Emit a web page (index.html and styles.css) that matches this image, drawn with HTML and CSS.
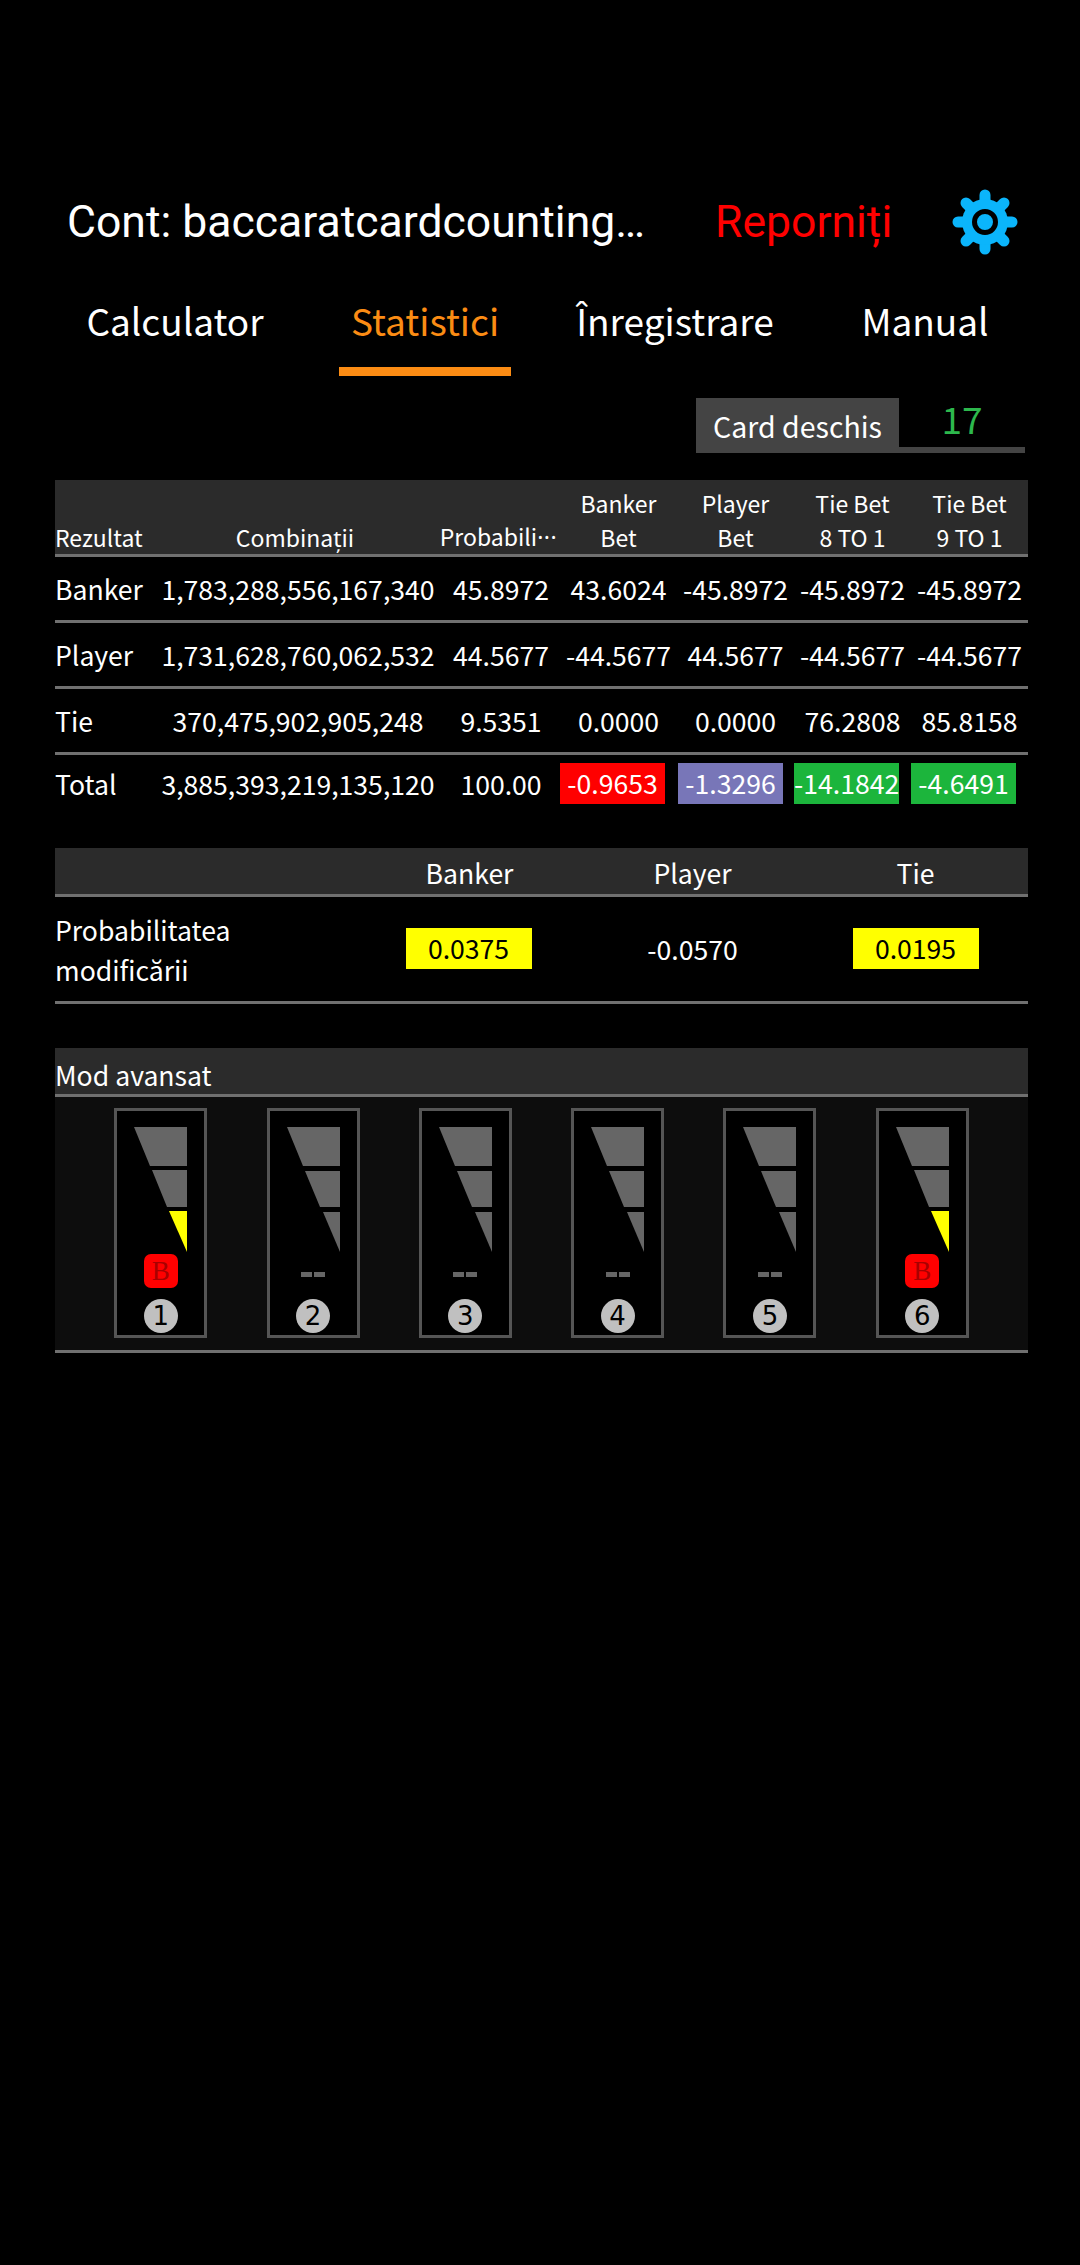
FILE: index.html
```html
<!DOCTYPE html>
<html lang="ro">
<head>
<meta charset="utf-8">
<title>Statistici</title>
<link rel="stylesheet" href="styles.css">
</head>
<body>
<svg class="defs" width="0" height="0" aria-hidden="true">
  <defs>
    <symbol id="wedge-g" viewBox="0 0 93 230">
      <polygon class="g" points="20,19 73,19 73,58 36,58"/>
      <polygon class="g" points="38,63 73,63 73,99 53,99"/>
      <polygon class="g" points="56,104 73,104 73,144"/>
    </symbol>
    <symbol id="wedge-y" viewBox="0 0 93 230">
      <polygon class="g" points="20,19 73,19 73,58 36,58"/>
      <polygon class="g" points="38,62 73,62 73,99 53,99"/>
      <polygon class="y" points="55,103 73,103 73,144"/>
    </symbol>
  </defs>
</svg>
<main class="page">
  <header class="top">
    <div class="account">Cont: baccaratcardcounting…</div>
    <div class="restart">Reporniți</div>
    <svg class="gear" viewBox="-35 -35 70 70" aria-label="Setări">
      <g class="teeth">
        <line x1="0" y1="0" x2="0" y2="-27"/>
        <line x1="0" y1="0" x2="19" y2="-19"/>
        <line x1="0" y1="0" x2="27" y2="0"/>
        <line x1="0" y1="0" x2="19" y2="19"/>
        <line x1="0" y1="0" x2="0" y2="27"/>
        <line x1="0" y1="0" x2="-19" y2="19"/>
        <line x1="0" y1="0" x2="-27" y2="0"/>
        <line x1="0" y1="0" x2="-19" y2="-19"/>
      </g>
      <circle class="gear-body" r="23"/>
      <circle class="gear-ring" r="10.5"/>
    </svg>
  </header>

  <nav class="tabs">
    <div class="tab"><span class="tab-label">Calculator</span></div>
    <div class="tab active"><span class="tab-label">Statistici</span></div>
    <div class="tab"><span class="tab-label">Înregistrare</span></div>
    <div class="tab"><span class="tab-label">Manual</span></div>
  </nav>

  <div class="open-card">
    <div class="open-label">Card deschis</div>
    <div class="open-value">17</div>
  </div>

  <section class="stats">
    <div class="row head">
      <div class="left">Rezultat</div>
      <div class="off">Combinații</div>
      <div class="prob">Probabili<span class="dots">···</span></div>
      <div>Banker<br>Bet</div>
      <div>Player<br>Bet</div>
      <div>Tie Bet<br>8 TO 1</div>
      <div>Tie Bet<br>9 TO 1</div>
    </div>
    <div class="row body">
      <div class="left">Banker</div><div>1,783,288,556,167,340</div><div class="pct">45.8972</div><div>43.6024</div><div>-45.8972</div><div>-45.8972</div><div>-45.8972</div>
    </div>
    <div class="row body">
      <div class="left">Player</div><div>1,731,628,760,062,532</div><div class="pct">44.5677</div><div>-44.5677</div><div>44.5677</div><div>-44.5677</div><div>-44.5677</div>
    </div>
    <div class="row body">
      <div class="left">Tie</div><div>370,475,902,905,248</div><div class="pct">9.5351</div><div>0.0000</div><div>0.0000</div><div>76.2808</div><div>85.8158</div>
    </div>
    <div class="row total">
      <div class="left">Total</div><div>3,885,393,219,135,120</div><div class="pct">100.00</div>
      <div class="chip red">-0.9653</div><div class="chip purple">-1.3296</div><div class="chip green">-14.1842</div><div class="chip green">-4.6491</div>
    </div>
  </section>

  <section class="change">
    <div class="crow chead">
      <div></div><div>Banker</div><div>Player</div><div>Tie</div>
    </div>
    <div class="crow cbody">
      <div class="left label">Probabilitatea<br>modificării</div>
      <div class="cell first"><span class="chip yellow">0.0375</span></div>
      <div class="cell">-0.0570</div>
      <div class="cell"><span class="chip yellow">0.0195</span></div>
    </div>
  </section>

  <section class="advanced">
    <div class="adv-head">Mod avansat</div>
    <div class="adv-body">
      <div class="slot"><svg class="wedge"><use href="#wedge-y"/></svg><div class="badge">B</div><div class="num">1</div></div>
      <div class="slot"><svg class="wedge"><use href="#wedge-g"/></svg><div class="dashes"><i></i><i></i></div><div class="num">2</div></div>
      <div class="slot"><svg class="wedge"><use href="#wedge-g"/></svg><div class="dashes"><i></i><i></i></div><div class="num">3</div></div>
      <div class="slot"><svg class="wedge"><use href="#wedge-g"/></svg><div class="dashes"><i></i><i></i></div><div class="num">4</div></div>
      <div class="slot"><svg class="wedge"><use href="#wedge-g"/></svg><div class="dashes"><i></i><i></i></div><div class="num">5</div></div>
      <div class="slot"><svg class="wedge"><use href="#wedge-y"/></svg><div class="badge">B</div><div class="num">6</div></div>
    </div>
  </section>
</main>
</body>
</html>
```
FILE: styles.css
```css
* { box-sizing: border-box; }
html, body { margin: 0; padding: 0; background: #000; }
body {
  width: 1080px;
  height: 2265px;
  overflow: hidden;
  color: #fff;
  font-family: "Noto Sans CJK SC", "Noto Sans", sans-serif;
}
.defs { position: absolute; }
.page { padding-top: 187px; }

.top {
  display: flex;
  align-items: center;
  height: 70px;
  padding-left: 67px;
  font-family: Roboto, sans-serif;
  font-size: 44.5px;
}
.account { width: 648px; white-space: nowrap; }
.restart { width: 235px; color: #f00; }
.gear { width: 70px; height: 70px; }
.teeth line { stroke: #0bb5fb; stroke-width: 11; stroke-linecap: round; }
.gear-body { fill: #0bb5fb; }
.gear-ring { fill: #0bb5fb; stroke: #000; stroke-width: 5; }

.tabs {
  display: grid;
  grid-template-columns: repeat(4, 250px);
  margin: 34px 0 0 50px;
  font-size: 37px;
  text-align: center;
}
.tab-label {
  display: inline-block;
  height: 85px;
  padding: 0 12px;
  line-height: 59px;
}
.active .tab-label { color: #fb8c14; border-bottom: 9px solid #fb8c14; }

.open-card {
  display: flex;
  justify-content: flex-end;
  height: 55px;
  margin: 22px 55px 0 0;
}
.open-label {
  width: 203px;
  padding-top: 5px;
  background: #444;
  font-size: 28.5px;
  line-height: 46px;
  text-align: center;
}
.open-value {
  width: 126px;
  border-bottom: 6px solid #444;
  color: #2db84d;
  font-size: 37px;
  line-height: 41px;
  text-align: center;
}

.stats, .change, .advanced { margin: 0 52px 0 55px; }
.stats { margin-top: 27px; }
.row {
  display: grid;
  grid-template-columns: 102px 282px 121px repeat(4, 117px);
  align-items: center;
  text-align: center;
  white-space: nowrap;
}
.left { text-align: left; }
.pct { padding-left: 3px; }
.head {
  height: 77px;
  align-items: end;
  border-bottom: 3px solid #707070;
  background: #2b2b2b;
  font-size: 23px;
  line-height: 34px;
}
.head .off { padding-right: 6px; }
.head .prob { padding-right: 2px; }
.dots { font-family: "Noto Sans", sans-serif; letter-spacing: 0.5px; }
.body {
  height: 66px;
  border-bottom: 3px solid #707070;
  font-size: 26.6px;
}
.total { height: 56px; font-size: 26.6px; }
.chip {
  display: block;
  width: 105px;
  height: 41px;
  line-height: 40px;
}
.red { background: #f00; }
.purple { margin-left: 1px; background: #7876b8; }
.green { background: #1cb53c; }
.yellow { width: 126px; margin-bottom: 2px; background: #ff0; color: #000; }

.change { margin-top: 37px; }
.crow {
  display: grid;
  grid-template-columns: 303px repeat(3, 223px);
  align-items: center;
  text-align: center;
}
.chead {
  height: 49px;
  padding-top: 3px;
  border-bottom: 3px solid #707070;
  background: #2b2b2b;
  font-size: 26.6px;
}
.cbody {
  height: 107px;
  border-bottom: 3px solid #707070;
  font-size: 26.6px;
  line-height: 40px;
}
.label { padding-top: 2px; }
.cell { display: flex; justify-content: center; }
.first { padding-right: 2px; }

.advanced { margin-top: 44px; }
.adv-head {
  height: 49px;
  border-bottom: 3px solid #707070;
  background: #2b2b2b;
  font-size: 26.6px;
  line-height: 54px;
}
.adv-body {
  display: flex;
  justify-content: space-evenly;
  height: 256px;
  padding-top: 11px;
  border-bottom: 3px solid #707070;
  background: #0d0d0d;
}
.slot {
  display: flex;
  flex-direction: column;
  align-items: center;
  width: 93px;
  height: 230px;
  position: relative;
  border: 3px solid #555;
  background: #000;
}
.wedge {
  position: absolute;
  top: -3px;
  left: -3px;
  width: 93px;
  height: 230px;
}
.wedge use { width: 93px; height: 230px; }
.g { fill: #666; }
.y { fill: #ff0; }
.badge {
  width: 34px;
  height: 34px;
  margin-top: 143px;
  border-radius: 7px;
  background: #f00;
  color: #a80000;
  font-family: "Liberation Serif", serif;
  font-size: 27px;
  line-height: 34px;
  text-align: center;
}
.dashes {
  display: flex;
  gap: 2px;
  height: 34px;
  margin-top: 143px;
  padding-top: 18px;
}
.dashes i {
  display: block;
  width: 11px;
  height: 5px;
  background: #666;
}
.num {
  width: 34px;
  height: 34px;
  margin-top: 11px;
  border-radius: 50%;
  background: #c0c0c0;
  color: #000;
  font-family: "DejaVu Sans", sans-serif;
  font-size: 26px;
  line-height: 34px;
  text-align: center;
}
```
